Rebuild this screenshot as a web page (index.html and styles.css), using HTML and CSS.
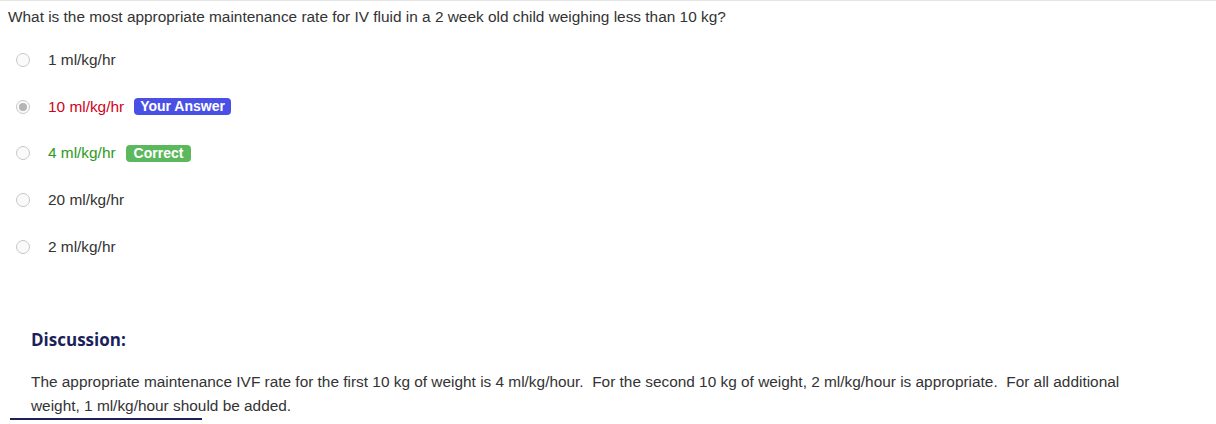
FILE: index.html
```html
<!DOCTYPE html>
<html>
<head>
<meta charset="utf-8">
<link rel="stylesheet" href="styles.css">
</head>
<body>
<div class="page">
  <div class="question">What is the most appropriate maintenance rate for IV fluid in a 2 week old child weighing less than 10 kg?</div>
  <ul class="options">
    <li class="option"><span class="radio"></span><span class="label">1 ml/kg/hr</span></li>
    <li class="option"><span class="radio checked"></span><span class="label wrong">10 ml/kg/hr</span><span class="badge badge-answer">Your Answer</span></li>
    <li class="option"><span class="radio"></span><span class="label right">4 ml/kg/hr</span><span class="badge badge-correct">Correct</span></li>
    <li class="option"><span class="radio"></span><span class="label">20 ml/kg/hr</span></li>
    <li class="option"><span class="radio"></span><span class="label">2 ml/kg/hr</span></li>
  </ul>
  <div class="discussion">
    <h3 class="disc-title">Discussion:</h3>
    <p class="disc-text">The appropriate maintenance IVF rate for the first 10 kg of weight is 4 ml/kg/hour.&nbsp; For the second 10 kg of weight, 2 ml/kg/hour is appropriate.&nbsp; For all additional weight, 1 ml/kg/hour should be added.</p>
  </div>
  <div class="rule"></div>
</div>
</body>
</html>
```
FILE: styles.css
```css
html, body {
  margin: 0;
  padding: 0;
  background: #fff;
}
body {
  font-family: "Liberation Sans", Arial, sans-serif;
  font-size: 15.4px;
  color: #333;
}
.page {
  border-top: 1px solid #e6e6e6;
}
.question {
  padding: 6px 8px 0 8px;
  line-height: 20px;
}
.options {
  list-style: none;
  margin: 0;
  padding: 9.5px 0 0 0;
}
.option {
  display: flex;
  align-items: center;
  height: 46.75px;
  margin: 0;
}
.radio {
  width: 12px;
  height: 12px;
  border: 1px solid #c8c8c8;
  border-radius: 50%;
  margin-left: 16px;
  margin-right: 18px;
  background: #fafafa;
  box-sizing: content-box;
  flex: none;
  position: relative;
}
.radio.checked::after {
  content: "";
  position: absolute;
  left: 2px;
  top: 2px;
  width: 8px;
  height: 8px;
  border-radius: 50%;
  background: #b5b5b5;
}
.label.wrong { color: #d0021b; }
.label.right { color: #2e9a1a; }
.badge {
  display: inline-block;
  color: #fff;
  font-weight: bold;
  font-size: 14px;
  line-height: 17px;
  padding: 0 6px;
  border-radius: 4px;
  margin-left: 10px;
}
.badge-answer { background: #4a50e6; }
.badge-correct { background: #5cb85c; padding: 0 8px; }
.discussion {
  padding: 0 0 0 31px;
  margin-top: 59px;
}
.disc-title {
  margin: 0;
  font-family: "Open Sans", "Noto Sans", sans-serif;
  font-weight: 700;
  font-size: 17px;
  color: #1b1f5a;
  line-height: 22px;
}
.disc-text {
  margin: 19px 0 0 0;
  line-height: 24px;
  width: 1110px;
}
.rule {
  margin-left: 10px;
  width: 192px;
  height: 2px;
  background: #1b1f5a;
}
```
